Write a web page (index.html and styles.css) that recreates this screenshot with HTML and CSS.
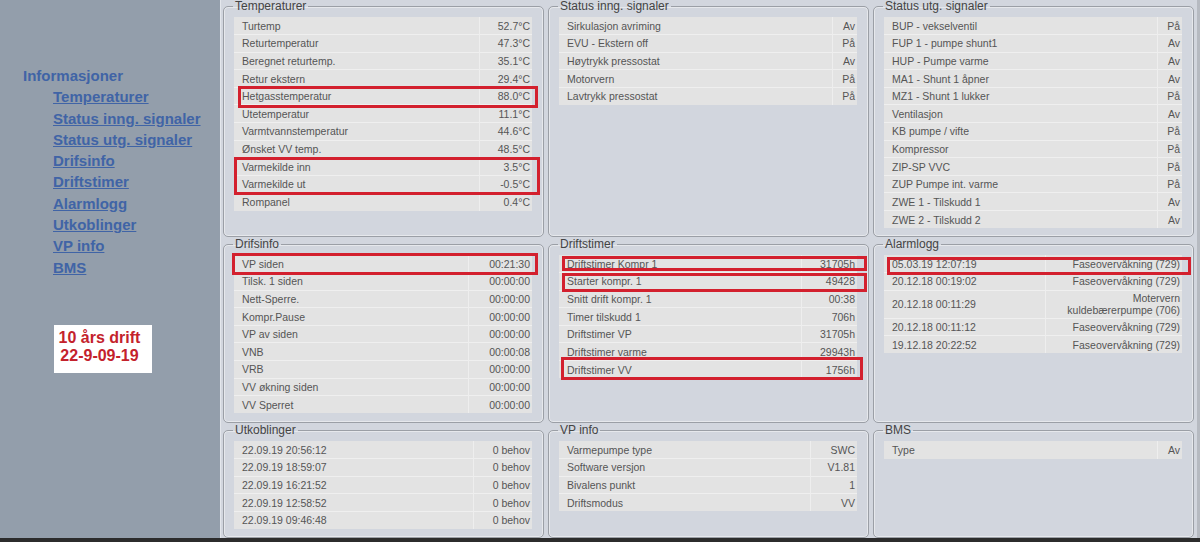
FILE: index.html
```html
<!DOCTYPE html>
<html lang="no">
<head>
    <meta charset="UTF-8">
    <title>Informasjoner</title>
    <link rel="stylesheet" href="styles.css">
</head>
<body>
<div id="page">
    <nav class="sidebar">
        <div class="menu-title">Informasjoner</div>
        <ul class="menu">
            <li><a href="#">Temperaturer</a></li>
            <li><a href="#">Status inng. signaler</a></li>
            <li><a href="#">Status utg. signaler</a></li>
            <li><a href="#">Drifsinfo</a></li>
            <li><a href="#">Driftstimer</a></li>
            <li><a href="#">Alarmlogg</a></li>
            <li><a href="#">Utkoblinger</a></li>
            <li><a href="#">VP info</a></li>
            <li><a href="#">BMS</a></li>
        </ul>
        <div class="note">10 års drift<br>22-9-09-19</div>
    </nav>

    <main class="panels">
        <fieldset class="panel">
            <legend>Temperaturer</legend>
            <table class="tbl tbl-temp">
                <tr><td>Turtemp</td><td class="v">52.7°C</td></tr>
                <tr><td>Returtemperatur</td><td class="v">47.3°C</td></tr>
                <tr><td>Beregnet returtemp.</td><td class="v">35.1°C</td></tr>
                <tr><td>Retur ekstern</td><td class="v">29.4°C</td></tr>
                <tr><td>Hetgasstemperatur</td><td class="v">88.0°C</td></tr>
                <tr><td>Utetemperatur</td><td class="v">11.1°C</td></tr>
                <tr><td>Varmtvannstemperatur</td><td class="v">44.6°C</td></tr>
                <tr><td>Ønsket VV temp.</td><td class="v">48.5°C</td></tr>
                <tr><td>Varmekilde inn</td><td class="v">3.5°C</td></tr>
                <tr><td>Varmekilde ut</td><td class="v">-0.5°C</td></tr>
                <tr><td>Rompanel</td><td class="v">0.4°C</td></tr>
            </table>
        </fieldset>

        <fieldset class="panel">
            <legend>Status inng. signaler</legend>
            <table class="tbl tbl-onoff">
                <tr><td>Sirkulasjon avriming</td><td class="v">Av</td></tr>
                <tr><td>EVU - Ekstern off</td><td class="v">På</td></tr>
                <tr><td>Høytrykk pressostat</td><td class="v">Av</td></tr>
                <tr><td>Motorvern</td><td class="v">På</td></tr>
                <tr><td>Lavtrykk pressostat</td><td class="v">På</td></tr>
            </table>
        </fieldset>

        <fieldset class="panel">
            <legend>Status utg. signaler</legend>
            <table class="tbl tbl-onoff">
                <tr><td>BUP - vekselventil</td><td class="v">På</td></tr>
                <tr><td>FUP 1 - pumpe shunt1</td><td class="v">Av</td></tr>
                <tr><td>HUP - Pumpe varme</td><td class="v">Av</td></tr>
                <tr><td>MA1 - Shunt 1 åpner</td><td class="v">Av</td></tr>
                <tr><td>MZ1 - Shunt 1 lukker</td><td class="v">På</td></tr>
                <tr><td>Ventilasjon</td><td class="v">Av</td></tr>
                <tr><td>KB pumpe / vifte</td><td class="v">På</td></tr>
                <tr><td>Kompressor</td><td class="v">På</td></tr>
                <tr><td>ZIP-SP VVC</td><td class="v">På</td></tr>
                <tr><td>ZUP Pumpe int. varme</td><td class="v">På</td></tr>
                <tr><td>ZWE 1 - Tilskudd 1</td><td class="v">Av</td></tr>
                <tr><td>ZWE 2 - Tilskudd 2</td><td class="v">Av</td></tr>
            </table>
        </fieldset>

        <fieldset class="panel">
            <legend>Drifsinfo</legend>
            <table class="tbl tbl-time">
                <tr><td>VP siden</td><td class="v">00:21:30</td></tr>
                <tr><td>Tilsk. 1 siden</td><td class="v">00:00:00</td></tr>
                <tr><td>Nett-Sperre.</td><td class="v">00:00:00</td></tr>
                <tr><td>Kompr.Pause</td><td class="v">00:00:00</td></tr>
                <tr><td>VP av siden</td><td class="v">00:00:00</td></tr>
                <tr><td>VNB</td><td class="v">00:00:08</td></tr>
                <tr><td>VRB</td><td class="v">00:00:00</td></tr>
                <tr><td>VV økning siden</td><td class="v">00:00:00</td></tr>
                <tr><td>VV Sperret</td><td class="v">00:00:00</td></tr>
            </table>
        </fieldset>

        <fieldset class="panel">
            <legend>Driftstimer</legend>
            <table class="tbl tbl-hours">
                <tr><td>Driftstimer Kompr 1</td><td class="v">31705h</td></tr>
                <tr><td>Starter kompr. 1</td><td class="v">49428</td></tr>
                <tr><td>Snitt drift kompr. 1</td><td class="v">00:38</td></tr>
                <tr><td>Timer tilskudd 1</td><td class="v">706h</td></tr>
                <tr><td>Driftstimer VP</td><td class="v">31705h</td></tr>
                <tr><td>Driftstimer varme</td><td class="v">29943h</td></tr>
                <tr><td>Driftstimer VV</td><td class="v">1756h</td></tr>
            </table>
        </fieldset>

        <fieldset class="panel">
            <legend>Alarmlogg</legend>
            <table class="tbl tbl-alarm">
                <tr><td>05.03.19 12:07:19</td><td class="v">Faseovervåkning (729)</td></tr>
                <tr><td>20.12.18 00:19:02</td><td class="v">Faseovervåkning (729)</td></tr>
                <tr class="tall"><td>20.12.18 00:11:29</td><td class="v">Motervern<br>kuldebærerpumpe (706)</td></tr>
                <tr><td>20.12.18 00:11:12</td><td class="v">Faseovervåkning (729)</td></tr>
                <tr><td>19.12.18 20:22:52</td><td class="v">Faseovervåkning (729)</td></tr>
            </table>
        </fieldset>

        <fieldset class="panel">
            <legend>Utkoblinger</legend>
            <table class="tbl tbl-off">
                <tr><td>22.09.19 20:56:12</td><td class="v">0 behov</td></tr>
                <tr><td>22.09.19 18:59:07</td><td class="v">0 behov</td></tr>
                <tr><td>22.09.19 16:21:52</td><td class="v">0 behov</td></tr>
                <tr><td>22.09.19 12:58:52</td><td class="v">0 behov</td></tr>
                <tr><td>22.09.19 09:46:48</td><td class="v">0 behov</td></tr>
            </table>
        </fieldset>

        <fieldset class="panel">
            <legend>VP info</legend>
            <table class="tbl tbl-vp">
                <tr><td>Varmepumpe type</td><td class="v">SWC</td></tr>
                <tr><td>Software versjon</td><td class="v">V1.81</td></tr>
                <tr><td>Bivalens punkt</td><td class="v">1</td></tr>
                <tr><td>Driftsmodus</td><td class="v">VV</td></tr>
            </table>
        </fieldset>

        <fieldset class="panel">
            <legend>BMS</legend>
            <table class="tbl tbl-onoff">
                <tr><td>Type</td><td class="v">Av</td></tr>
            </table>
        </fieldset>
    </main>

    <!-- red annotation boxes drawn over the screenshot -->
    <div class="mark mark-hetgass"></div>
    <div class="mark mark-kilde"></div>
    <div class="mark mark-vp"></div>
    <div class="mark mark-kompr"></div>
    <div class="mark mark-starter"></div>
    <div class="mark mark-vv"></div>
    <div class="mark mark-alarm"></div>
</div>
</body>
</html>
```

FILE: styles.css
```css
body {
    margin: 0;
    background-color: #2c2c2c;
    font-family: 'Liberation Sans', Arial, sans-serif;
}

#page {
    position: relative;
    display: flex;
    width: 1200px;
    height: 538px;
    overflow: hidden;
}

/* Left menu */
.sidebar {
    width: 221px;
    flex-shrink: 0;
    background-color: #939eab;
    border-right: 1px solid #e4e7ec;
    padding: 65px 0 0 23px;
    box-sizing: border-box;
    font-size: 15px;
    font-weight: bold;
    line-height: 21.3px;
    color: #4064a6;
}

.menu {
    list-style: none;
    margin: 0;
    padding: 0 0 0 30px;
}

.menu a {
    color: #4064a6;
    text-decoration: underline;
}

.note {
    width: 98px;
    margin: 47px 0 0 31px;
    padding: 4px 7px 8px 0;
    box-sizing: border-box;
    background-color: #ffffff;
    color: #c4222c;
    font-size: 16px;
    line-height: 18px;
    text-align: center;
}

/* Panels */
.panels {
    flex: 1;
    display: grid;
    grid-template-columns: repeat(3, 321px);
    grid-template-rows: 237px 185px 114px;
    column-gap: 4px;
    row-gap: 1px;
    padding-left: 2px;
    background-color: #d2d6de;
    border-right: 3px solid #b6bac1;
}

.panel {
    margin: 0;
    padding: 5px 11px 0 10px;
    border: 1px solid #9b9fa6;
    border-radius: 5px;
    box-shadow: inset 0 0 0 1px #e6e8ec;
    min-width: 0;
}

.panel legend {
    padding: 0 2px;
    margin-left: -1px;
    font-size: 12px;
    line-height: 12px;
    color: #444444;
}

/* Data tables */
.tbl {
    width: 100%;
    border-collapse: collapse;
    font-size: 10.5px;
    color: #555555;
}

.tbl td {
    height: 17.6px;
    padding: 0 2px 0 8px;
    background-color: #e3e3e3;
    border-top: 1px solid #efefef;
    box-sizing: border-box;
    white-space: nowrap;
}

.tbl tr:first-child td {
    border-top: none;
}

.tbl td.v {
    text-align: right;
    border-left: 1px solid #eeeeee;
    padding-left: 0;
}

.tbl-temp td.v { width: 53px; }
.tbl-onoff td.v { width: 25px; }
.tbl-time td.v { width: 64px; }
.tbl-hours td.v { width: 56px; }
.tbl-alarm td.v { width: 137px; }
.tbl-off td.v { width: 59px; }
.tbl-vp td.v { width: 47px; }

.tbl-alarm td:first-child {
    padding-left: 8px;
}

.tbl-alarm .tall td {
    height: 28px;
    line-height: 12.5px;
}

/* Red highlight frames */
.mark {
    position: absolute;
    border: 3px solid #d3202e;
    box-sizing: border-box;
}

.mark-hetgass { left: 238px; top: 86px; width: 300px; height: 22px; }
.mark-kilde { left: 234px; top: 157px; width: 306px; height: 38px; }
.mark-vp { left: 232px; top: 253px; width: 306px; height: 22px; }
.mark-kompr { left: 562px; top: 256px; width: 305px; height: 15px; }
.mark-starter { left: 562px; top: 273px; width: 305px; height: 19px; }
.mark-vv { left: 561px; top: 357px; width: 302px; height: 23px; }
.mark-alarm { left: 887px; top: 257px; width: 304px; height: 18px; }
```
